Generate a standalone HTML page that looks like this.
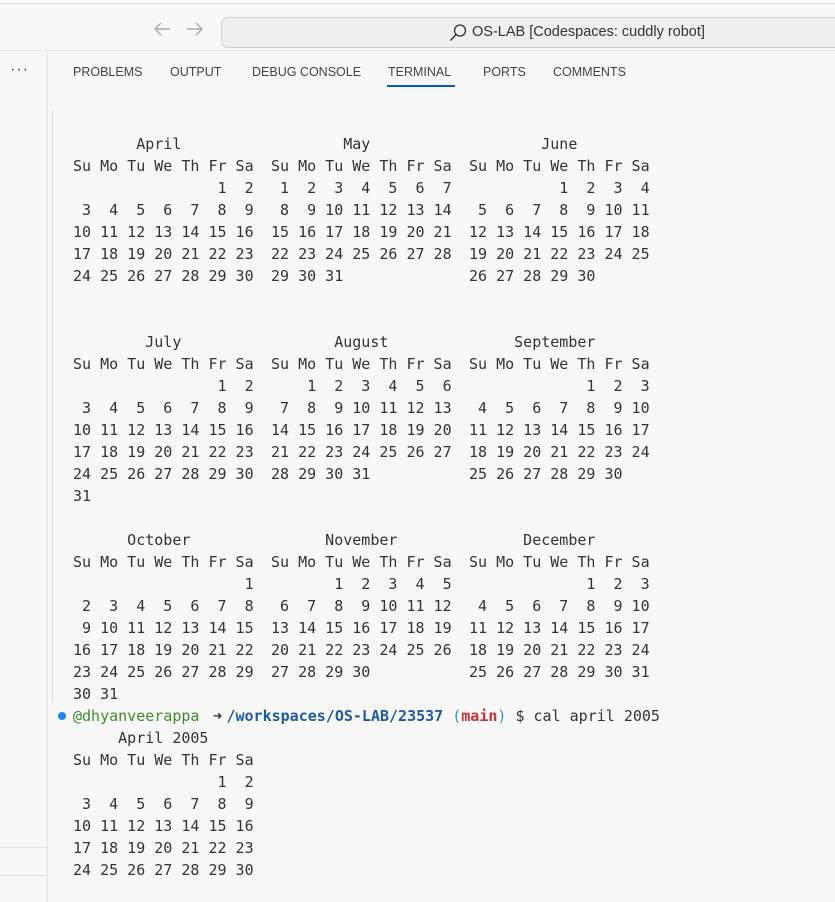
<!DOCTYPE html>
<html><head><meta charset="utf-8"><style>
body{margin:0;width:835px;height:902px;background:#f8f8f8;position:relative;overflow:hidden;font-family:"Liberation Sans",sans-serif}
.topline{position:absolute;left:0;top:0;width:835px;height:3px;background:#fff;border-bottom:1px solid #dcdcdc}
.title{position:absolute;left:0;top:4px;width:835px;height:46px;border-bottom:1px solid #e5e5e5;background:#f8f8f8}
.search{position:absolute;left:221px;top:13px;width:640px;height:29px;border:1px solid #cfcfcf;border-radius:7px;background:#efefef}
.search span{position:absolute;left:250px;top:6px;font-size:14.5px;color:#333}
.side{position:absolute;left:0;top:51px;width:47px;height:851px;border-right:1px solid #e5e5e5}
.tabs{position:absolute;top:65px;font-size:12.5px;color:#444}
.tab{position:absolute;white-space:nowrap}
pre{margin:0;position:absolute;font-family:"DejaVu Sans Mono","Liberation Mono",monospace;font-size:15px;line-height:22px;color:#333}
.g{color:#3d8e29}.b{color:#1d5aa6;font-weight:bold}.c{color:#2a98b0}.r{color:#cd3131;font-weight:bold}
.ar{display:inline-block;width:18px;text-align:center;font-weight:bold}
</style></head><body>
<div class="topline"></div>
<div class="title">
<svg style="position:absolute;left:152px;top:15px" width="60" height="20"><path d="M18 10H3M9 4L3 10l6 6" stroke="#aaa" fill="none" stroke-width="1.4"/><path d="M35 10h15M44 4l6 6-6 6" stroke="#aaa" fill="none" stroke-width="1.4"/></svg>
<div class="search"><svg style="position:absolute;left:226px;top:5px" width="20" height="20"><circle cx="12" cy="7.5" r="5.5" stroke="#333" fill="none" stroke-width="1.3"/><path d="M8 11.5L2.5 17.5" stroke="#333" stroke-width="1.4"/></svg><span>OS-LAB [Codespaces: cuddly robot]</span></div>
</div>
<div class="side"><div style="position:absolute;left:10px;top:10px;font-size:16px;color:#444;letter-spacing:1px">···</div>
<div style="position:absolute;left:0;top:796px;width:47px;border-top:1px solid #e0e0e0"></div>
<div style="position:absolute;left:0;top:824px;width:47px;border-top:1px solid #e0e0e0"></div></div>
<div class="tabs">
<span class="tab" style="left:73px">PROBLEMS</span>
<span class="tab" style="left:170px">OUTPUT</span>
<span class="tab" style="left:252px">DEBUG CONSOLE</span>
<span class="tab" style="left:388px">TERMINAL</span>
<span class="tab" style="left:483px">PORTS</span>
<span class="tab" style="left:553px">COMMENTS</span>
</div>
<div style="position:absolute;left:387px;top:85px;width:68px;height:2px;background:#005fb8"></div>
<div style="position:absolute;left:52px;top:110px;width:1px;height:592px;background:#d8d8d8"></div>
<pre style="left:73px;top:133px">       April
Su Mo Tu We Th Fr Sa
                1  2
 3  4  5  6  7  8  9
10 11 12 13 14 15 16
17 18 19 20 21 22 23
24 25 26 27 28 29 30


        July
Su Mo Tu We Th Fr Sa
                1  2
 3  4  5  6  7  8  9
10 11 12 13 14 15 16
17 18 19 20 21 22 23
24 25 26 27 28 29 30
31

      October
Su Mo Tu We Th Fr Sa
                   1
 2  3  4  5  6  7  8
 9 10 11 12 13 14 15
16 17 18 19 20 21 22
23 24 25 26 27 28 29
30 31</pre>
<pre style="left:271px;top:133px">        May
Su Mo Tu We Th Fr Sa
 1  2  3  4  5  6  7
 8  9 10 11 12 13 14
15 16 17 18 19 20 21
22 23 24 25 26 27 28
29 30 31


       August
Su Mo Tu We Th Fr Sa
    1  2  3  4  5  6
 7  8  9 10 11 12 13
14 15 16 17 18 19 20
21 22 23 24 25 26 27
28 29 30 31


      November
Su Mo Tu We Th Fr Sa
       1  2  3  4  5
 6  7  8  9 10 11 12
13 14 15 16 17 18 19
20 21 22 23 24 25 26
27 28 29 30</pre>
<pre style="left:469px;top:133px">        June
Su Mo Tu We Th Fr Sa
          1  2  3  4
 5  6  7  8  9 10 11
12 13 14 15 16 17 18
19 20 21 22 23 24 25
26 27 28 29 30


     September
Su Mo Tu We Th Fr Sa
             1  2  3
 4  5  6  7  8  9 10
11 12 13 14 15 16 17
18 19 20 21 22 23 24
25 26 27 28 29 30


      December
Su Mo Tu We Th Fr Sa
             1  2  3
 4  5  6  7  8  9 10
11 12 13 14 15 16 17
18 19 20 21 22 23 24
25 26 27 28 29 30 31</pre>
<div style="position:absolute;left:58px;top:712px;width:8px;height:8px;border-radius:50%;background:#1a85ff"></div>
<pre style="left:73px;top:705px"><span class="g">@dhyanveerappa</span> <span class="ar">➜</span><span class="b">/workspaces/OS-LAB/23537</span> <span class="c">(</span><span class="r">main</span><span class="c">)</span> $ cal april 2005
     April 2005
Su Mo Tu We Th Fr Sa
                1  2
 3  4  5  6  7  8  9
10 11 12 13 14 15 16
17 18 19 20 21 22 23
24 25 26 27 28 29 30</pre>
</body></html>
